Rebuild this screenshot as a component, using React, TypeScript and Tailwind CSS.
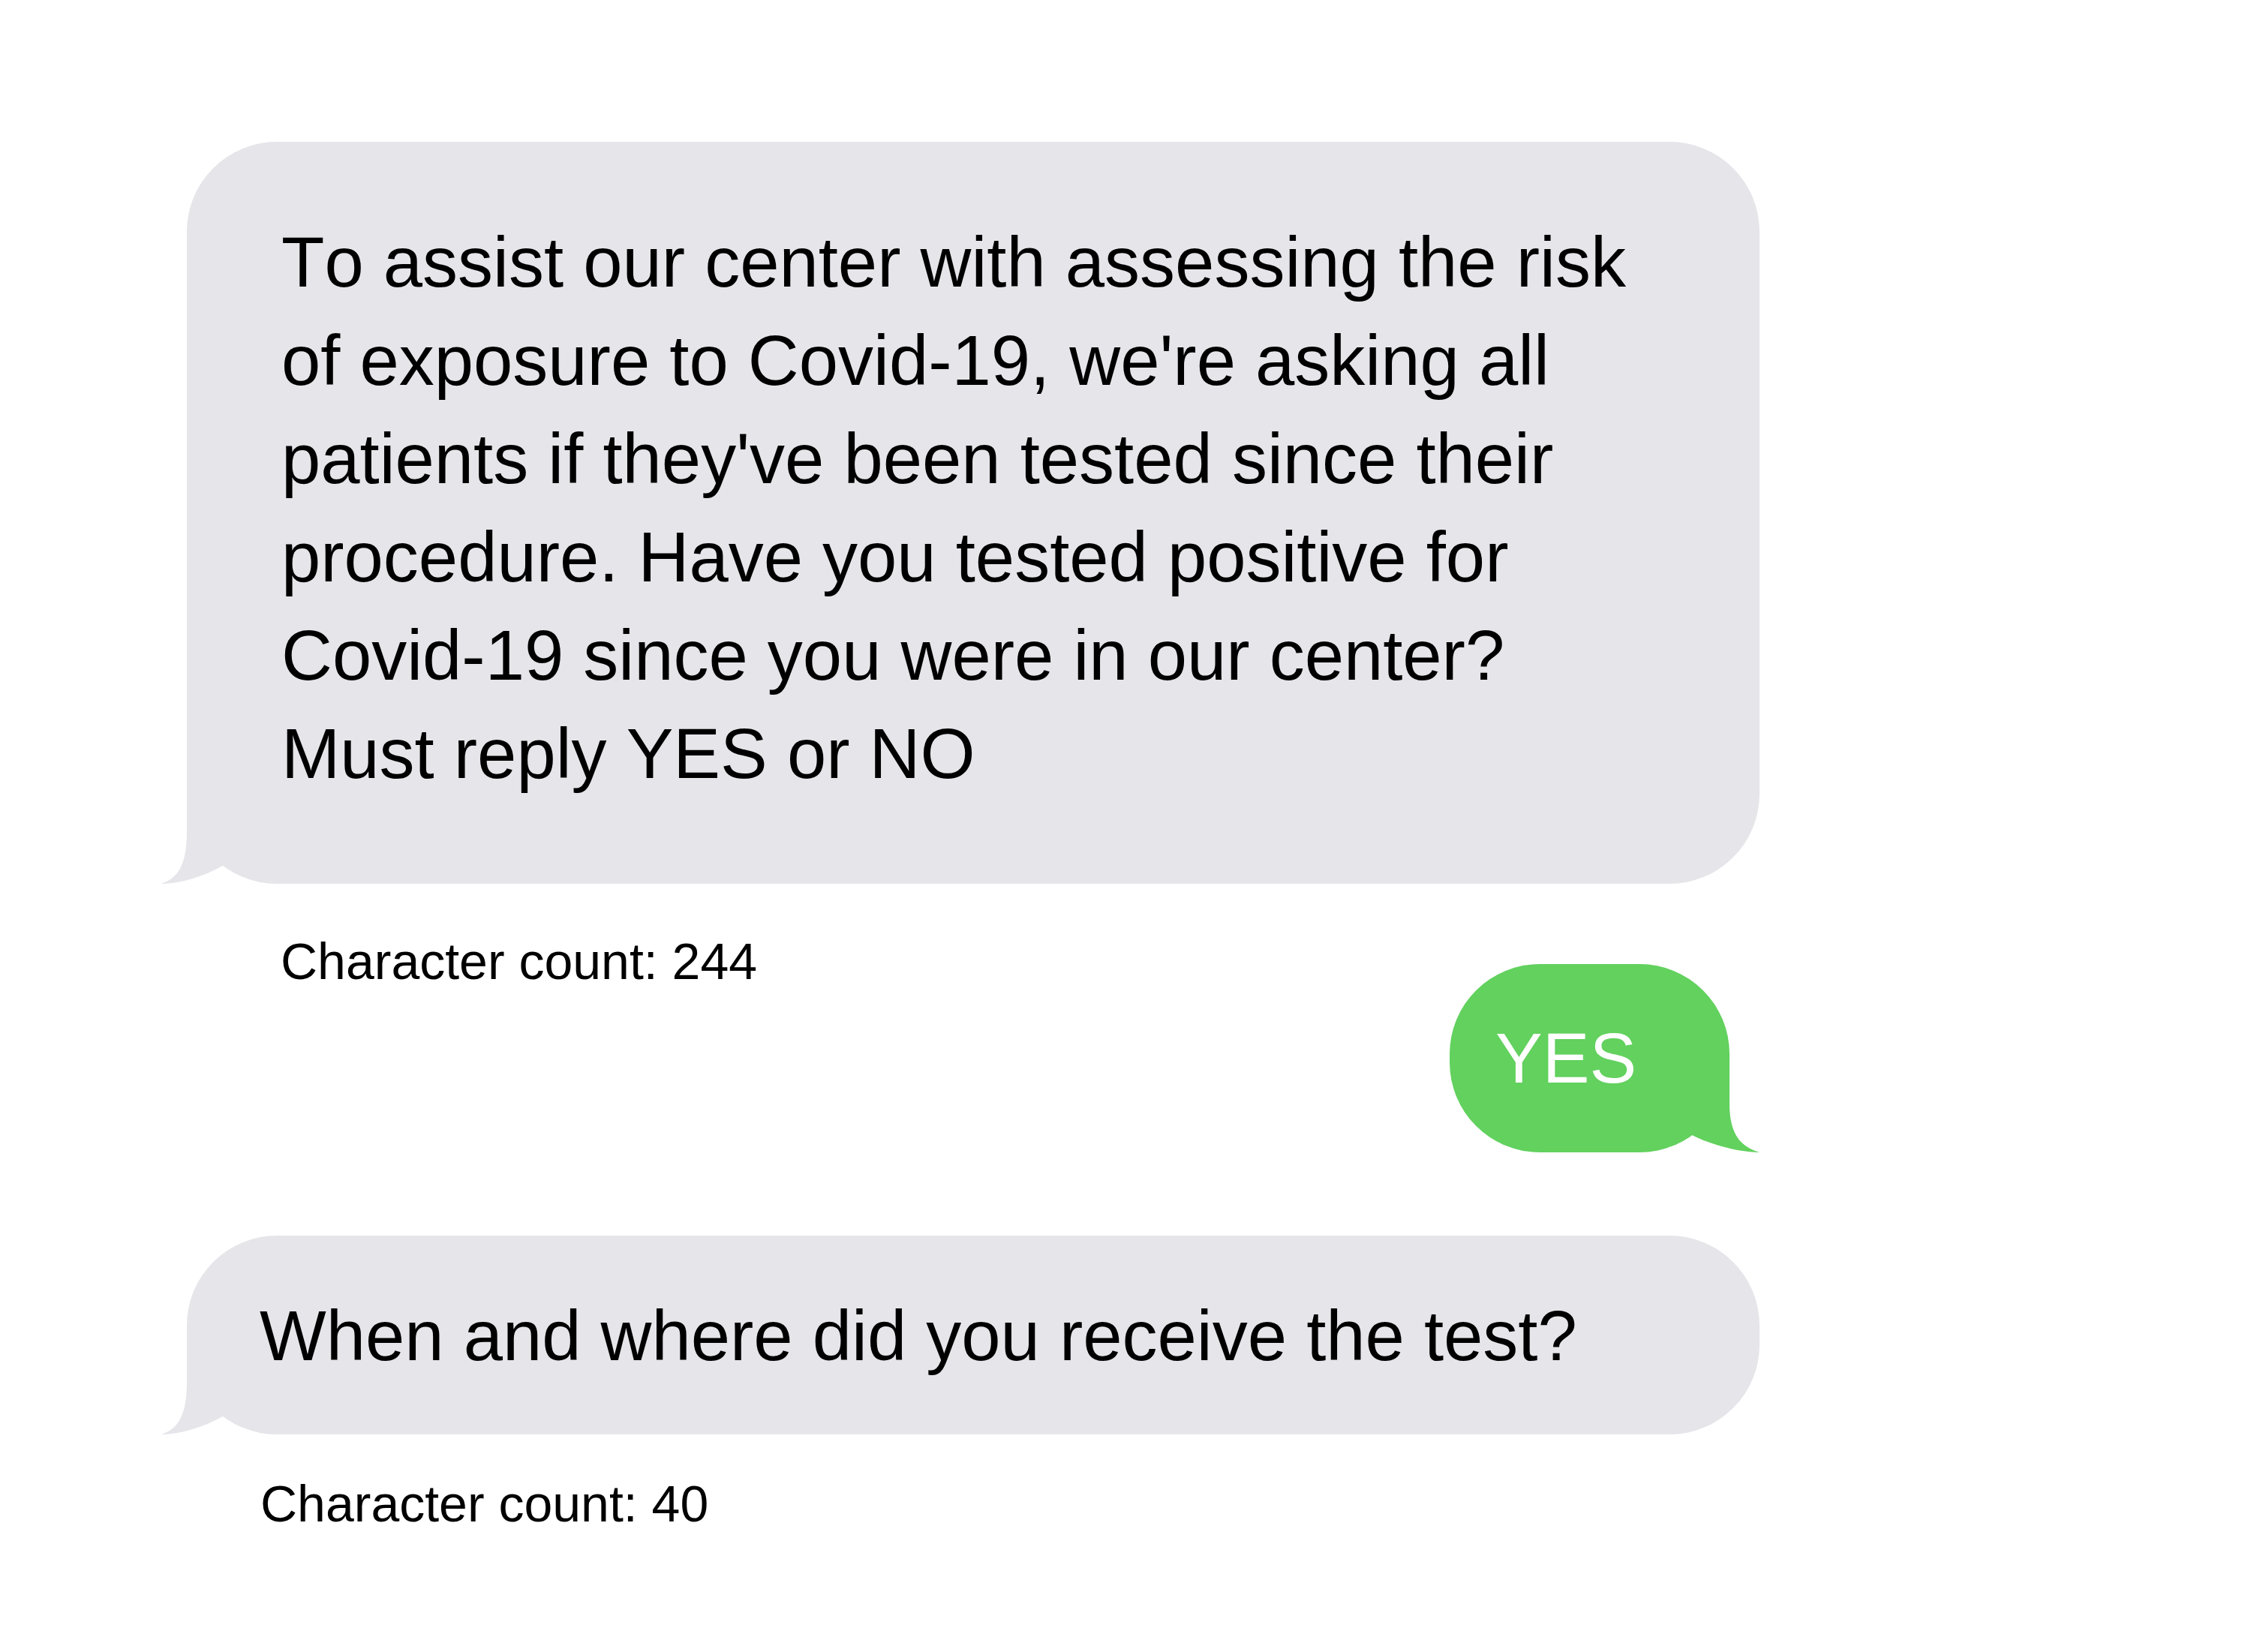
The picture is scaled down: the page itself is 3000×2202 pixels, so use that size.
import React from "react";

const GRAY = "#e5e5ea";
const GREEN = "#62d15e";

function LeftTail() {
  return (
    <svg
      className="absolute left-[-40px] bottom-0 w-[100px] h-[130px]"
      viewBox="-40 -130 100 130"
      aria-hidden
    >
      <path
        d="M0,-120 L0,-70 C0,-30 -9,-8 -34,0 C-10,0 25,-10 51,-26 L0,-120 Z"
        fill={GRAY}
      />
    </svg>
  );
}

function RightTail() {
  return (
    <svg
      className="absolute right-[-40px] bottom-0 w-[100px] h-[130px]"
      viewBox="-60 -130 100 130"
      aria-hidden
    >
      <path
        d="M0,-120 L0,-65 C0,-28 12,-8 40,0 C14,0 -25,-10 -50,-23 L0,-120 Z"
        fill={GREEN}
      />
    </svg>
  );
}

export default function App() {
  return (
    <div
      className="w-[3000px] h-[2202px] bg-white text-black [font-kerning:none]"
      style={{ fontFamily: '"Liberation Sans", Arial, sans-serif' }}
    >
      <div className="w-[2345px] pl-[249px] pt-[189px] flex flex-col">
        {/* Bubble 1 */}
        <div className="relative">
          <LeftTail />
          <div className="relative bg-[#e5e5ea] rounded-[120px] pl-[126px] pr-[128px] pt-[95px] pb-[108px] text-[94px] leading-[131px]">
            To assist our center with assessing the risk of exposure to Covid-19, we're asking all patients if they've been tested since their procedure. Have you tested positive for Covid-19 since you were in our center? Must reply YES or NO
          </div>
        </div>

        {/* Label + Reply row */}
        <div className="mt-[64px] flex justify-between items-start">
          <div className="ml-[125px] text-[68px] leading-[78px]">
            Character count: 244
          </div>
          <div className="relative mt-[43px] mr-[40px]">
            <RightTail />
            <div className="relative bg-[#62d15e] rounded-[120px] w-[373px] pl-[61px] pt-[71px] pb-[70px] text-[94px] leading-[110px] text-white">
              YES
            </div>
          </div>
        </div>

        {/* Bubble 2 */}
        <div className="relative mt-[111px]">
          <LeftTail />
          <div className="relative bg-[#e5e5ea] rounded-[120px] pl-[97px] pr-[128px] pt-[68px] pb-[66px] text-[94px] leading-[131px]">
            When and where did you receive the test?
          </div>
        </div>

        <div className="mt-[53px] ml-[98px] text-[68px] leading-[78px]">
          Character count: 40
        </div>
      </div>
    </div>
  );
}
